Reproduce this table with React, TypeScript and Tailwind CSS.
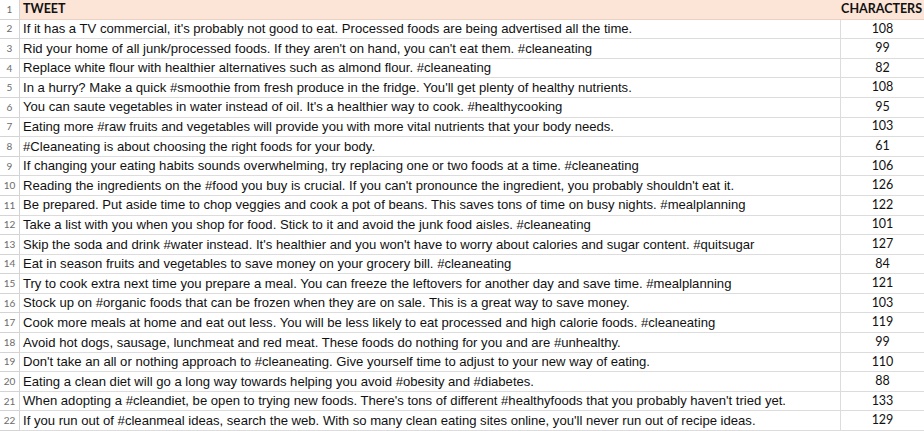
const rows: [string, number][] = [
  ["If it has a TV commercial, it's probably not good to eat. Processed foods are being advertised all the time.", 108],
  ["Rid your home of all junk/processed foods. If they aren't on hand, you can't eat them. #cleaneating", 99],
  ["Replace white flour with healthier alternatives such as almond flour. #cleaneating", 82],
  ["In a hurry? Make a quick #smoothie from fresh produce in the fridge. You'll get plenty of healthy nutrients.", 108],
  ["You can saute vegetables in water instead of oil. It's a healthier way to cook. #healthycooking", 95],
  ["Eating more #raw fruits and vegetables will provide you with more vital nutrients that your body needs.", 103],
  ["#Cleaneating is about choosing the right foods for your body.", 61],
  ["If changing your eating habits sounds overwhelming, try replacing one or two foods at a time. #cleaneating", 106],
  ["Reading the ingredients on the #food you buy is crucial. If you can't pronounce the ingredient, you probably shouldn't eat it.", 126],
  ["Be prepared. Put aside time to chop veggies and cook a pot of beans. This saves tons of time on busy nights. #mealplanning", 122],
  ["Take a list with you when you shop for food. Stick to it and avoid the junk food aisles. #cleaneating", 101],
  ["Skip the soda and drink #water instead. It's healthier and you won't have to worry about calories and sugar content. #quitsugar", 127],
  ["Eat in season fruits and vegetables to save money on your grocery bill. #cleaneating", 84],
  ["Try to cook extra next time you prepare a meal. You can freeze the leftovers for another day and save time. #mealplanning", 121],
  ["Stock up on #organic foods that can be frozen when they are on sale. This is a great way to save money.", 103],
  ["Cook more meals at home and eat out less. You will be less likely to eat processed and high calorie foods. #cleaneating", 119],
  ["Avoid hot dogs, sausage, lunchmeat and red meat. These foods do nothing for you and are #unhealthy.", 99],
  ["Don't take an all or nothing approach to #cleaneating. Give yourself time to adjust to your new way of eating.", 110],
  ["Eating a clean diet will go a long way towards helping you avoid #obesity and #diabetes.", 88],
  ["When adopting a #cleandiet, be open to trying new foods. There's tons of different #healthyfoods that you probably haven't tried yet.", 133],
  ["If you run out of #cleanmeal ideas, search the web. With so many clean eating sites online, you'll never run out of recipe ideas.", 129],
];

const cal = "font-['Lato','Open_Sans',sans-serif]";

export default function App() {
  return (
    <div className="w-[924px] h-[431px] bg-white overflow-hidden grid grid-cols-[20px_1fr_84px] grid-rows-[repeat(22,minmax(0,1fr))] text-[#111]">
      <div className={`${cal} border-r border-b border-[#d4d4d4] text-[10px] text-[#6b6b6b] flex items-center justify-center`}>1</div>
      <div className={`${cal} bg-[#fce4d6] border-b border-[#e8d2c4] flex items-center pl-[3px] text-[12.5px] font-bold`}>TWEET</div>
      <div className={`${cal} bg-[#fce4d6] border-b border-[#e8d2c4] flex items-center justify-end pr-[2px] text-[12.5px] font-bold`}>CHARACTERS</div>
      {rows.map(([t, n], i) => (
        <div key={i} className="contents">
          <div className={`${cal} border-r border-b border-[#d4d4d4] text-[10px] text-[#6b6b6b] flex items-center justify-center`}>{i + 2}</div>
          <div className="border-b border-[#dcdcdc] flex items-center pl-[3px] font-['Liberation_Sans',Arial,sans-serif] text-[13.1px] whitespace-nowrap overflow-visible">{t}</div>
          <div className={`${cal} border-l border-b border-[#dcdcdc] flex items-center justify-center text-[12.5px]`}>{n}</div>
        </div>
      ))}
    </div>
  );
}
